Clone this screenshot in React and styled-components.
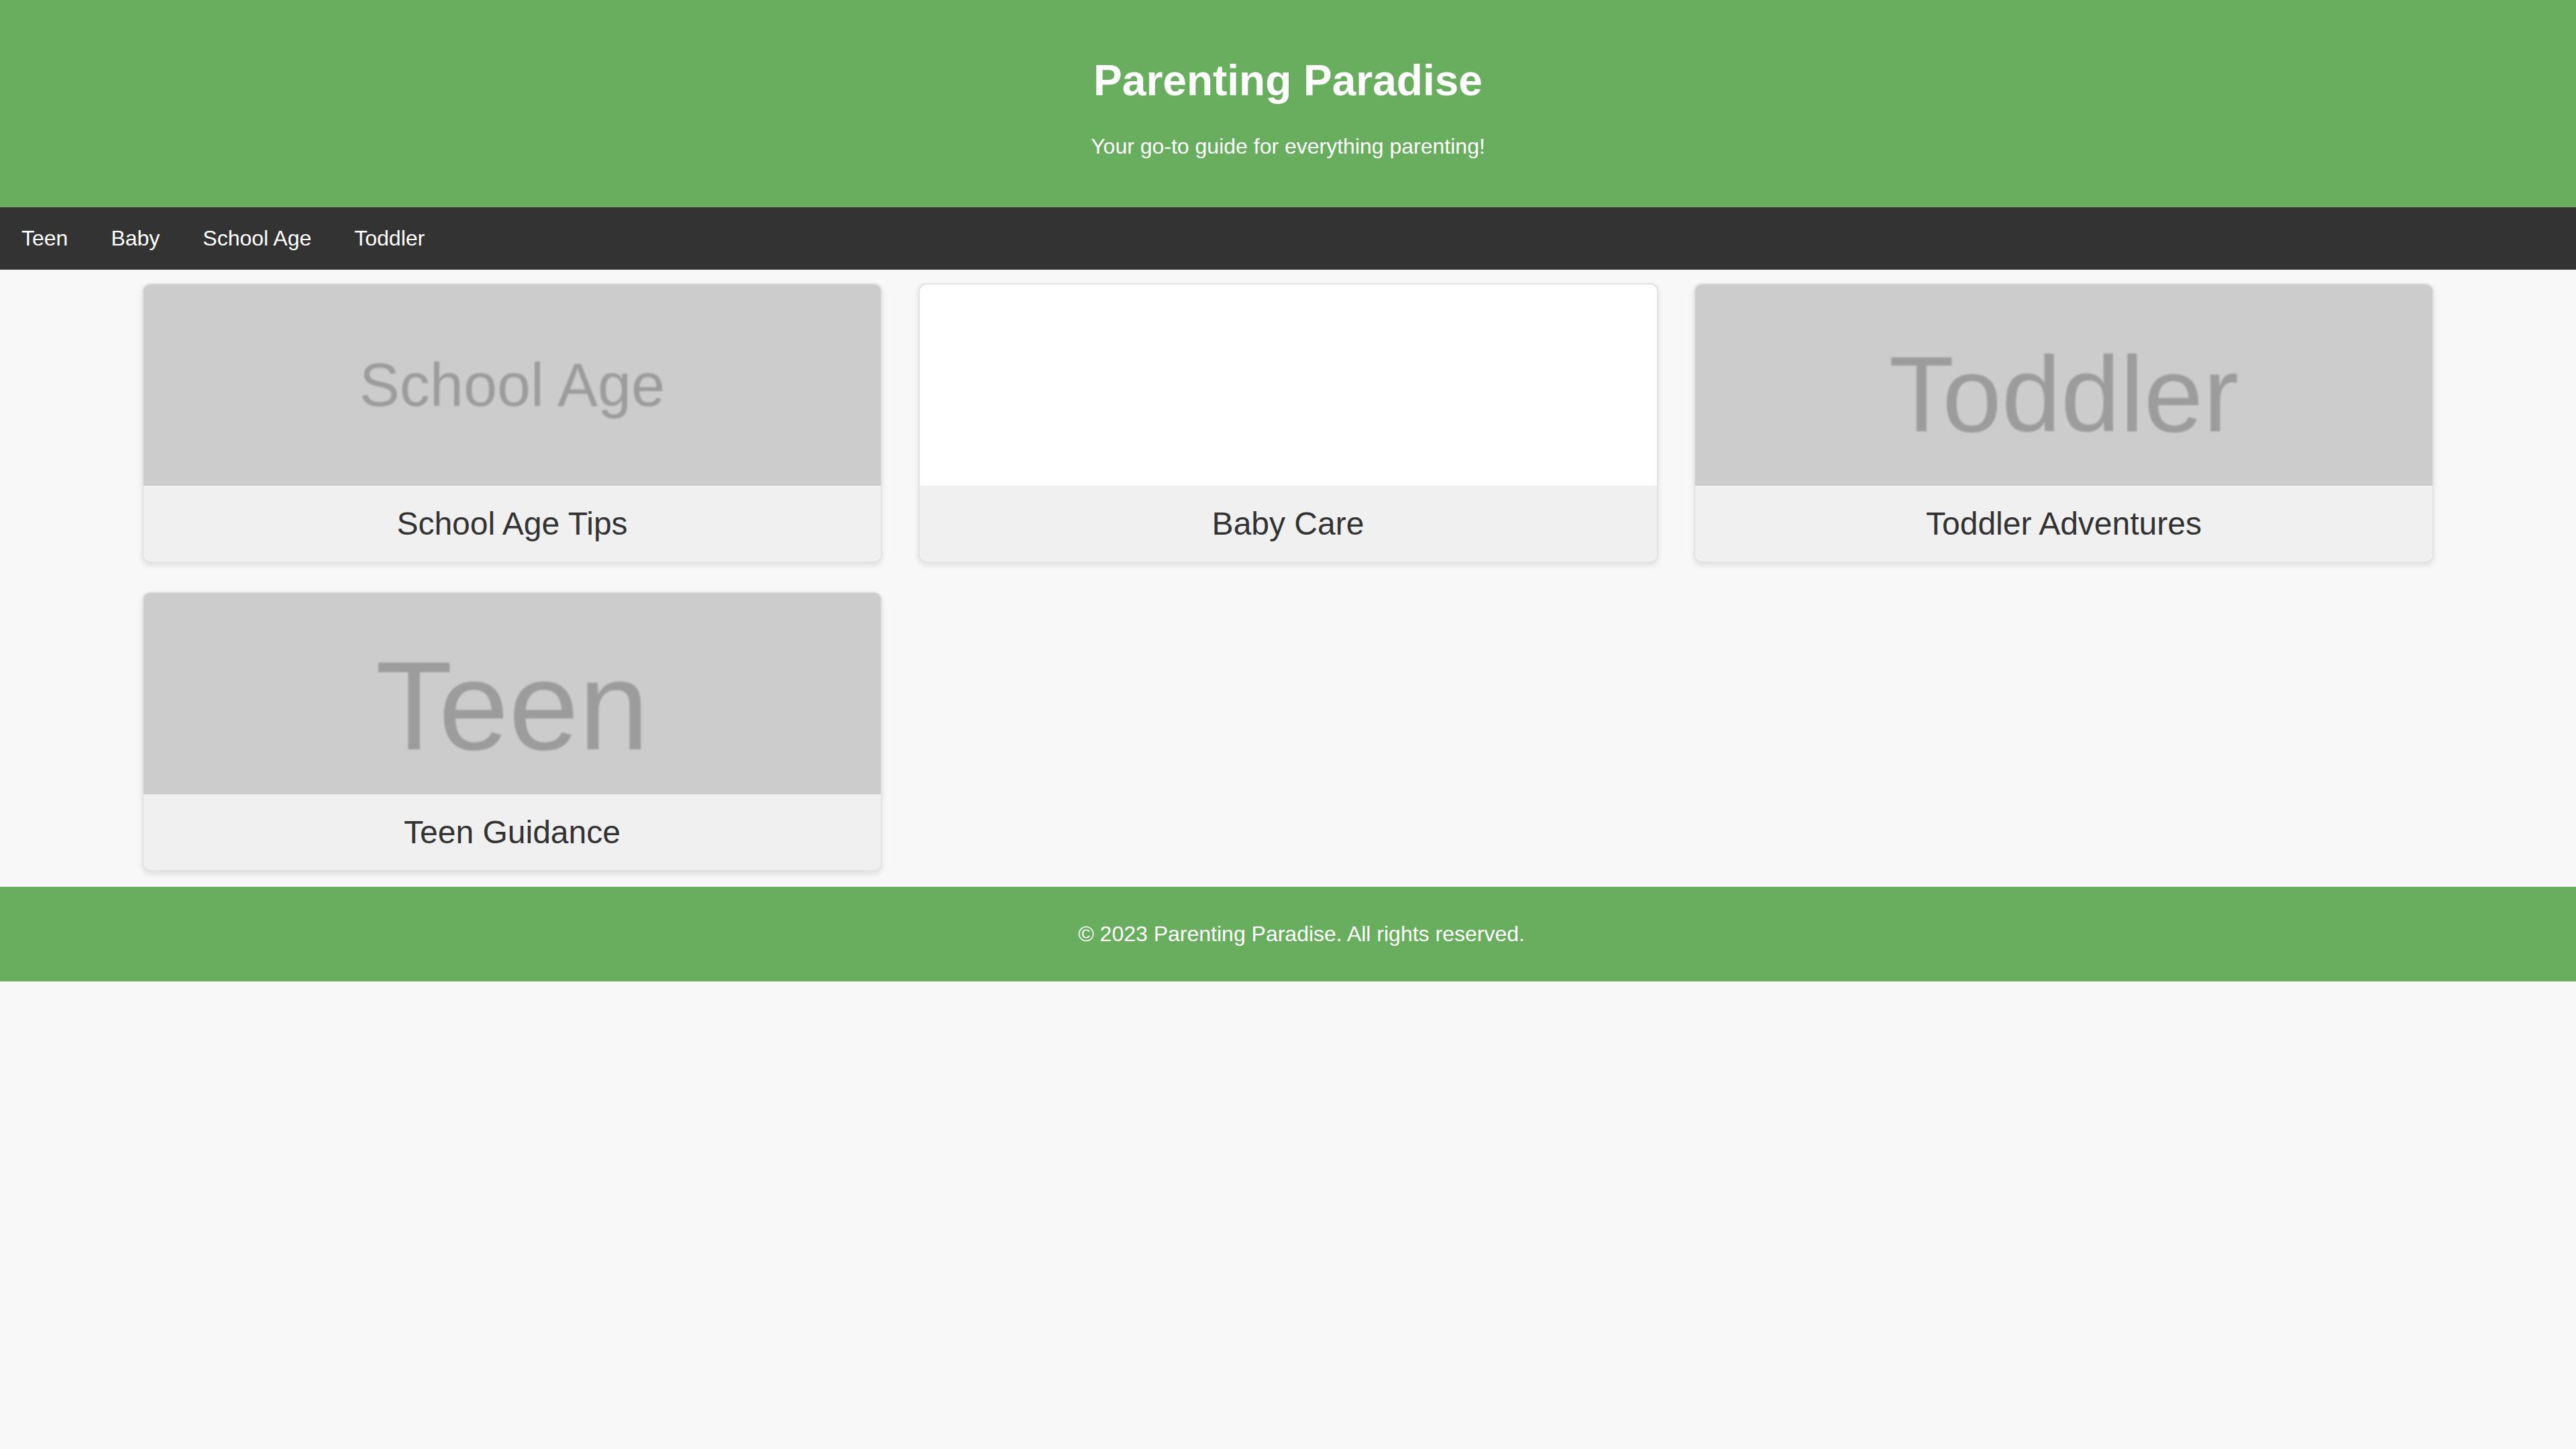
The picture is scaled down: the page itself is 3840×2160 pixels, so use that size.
import React from "react";
import styled, { createGlobalStyle } from "styled-components";

const GlobalStyle = createGlobalStyle`
  html, body {
    margin: 0;
    padding: 0;
    background: #f8f8f8;
    font-family: "Liberation Sans", Arial, sans-serif;
    color: #333;
  }
  * { box-sizing: border-box; }
`;

const Header = styled.header`
  background: #69ae5e;
  color: #fff;
  text-align: center;
  padding: 40px 0;
`;

const Title = styled.h1`
  font-size: 64px;
  font-weight: bold;
  margin: 42.88px 0;
  line-height: normal;
`;

const Tagline = styled.p`
  font-size: 32px;
  margin: 32px 0;
  line-height: normal;
`;

const Nav = styled.nav`
  background: #333;
  display: flex;
`;

const NavLink = styled.a`
  color: #fff;
  text-decoration: none;
  font-size: 32px;
  line-height: 36.8px;
  padding: 28px 32px;
`;

const Main = styled.main`
  padding: 0;
`;

const CardGrid = styled.div`
  width: 90%;
  margin: 0 auto;
  display: flex;
  flex-wrap: wrap;
  justify-content: space-between;
`;

const Card = styled.div`
  width: 1103px;
  margin: 20px 20px 23px;
  border: 2px solid #e2e2e2;
  border-radius: 12px;
  overflow: hidden;
  box-shadow: 0 4px 8px rgba(0, 0, 0, 0.1);
  background: #f0f0f0;
  display: flex;
  flex-direction: column;
`;

const CardImage = styled.div`
  height: 300px;
  background: ${(p) => (p.$blank ? "#ffffff" : "#cccccc")};
  display: flex;
  align-items: center;
  justify-content: center;
  overflow: hidden;
  padding-top: ${(p) => p.$shift || 0}px;
`;

const ImageText = styled.span`
  font-family: "Liberation Sans", Arial, sans-serif;
  font-size: ${(p) => p.$size}px;
  line-height: 1;
  color: #9c9c9c;
  filter: blur(1.2px);
  white-space: nowrap;
`;

const CardTitle = styled.h2`
  margin: 0;
  padding: 29px 16px;
  font-size: 48px;
  font-weight: normal;
  line-height: normal;
  text-align: center;
  color: #333;
  background: #f0f0f0;
`;

const Footer = styled.footer`
  background: #69ae5e;
  color: #fff;
  text-align: center;
  padding: 20px 0 20px 40px;
`;

const FooterText = styled.p`
  font-size: 32px;
  margin: 32px 0;
  line-height: normal;
`;

const cards = [
  { title: "School Age Tips", label: "School Age", size: 90, shift: 0 },
  { title: "Baby Care", label: "", size: 0, blank: true },
  { title: "Toddler Adventures", label: "Toddler", size: 159, shift: 30 },
  { title: "Teen Guidance", label: "Teen", size: 188, shift: 36 },
];

export default function App() {
  return (
    <>
      <GlobalStyle />
      <Header>
        <Title>Parenting Paradise</Title>
        <Tagline>Your go-to guide for everything parenting!</Tagline>
      </Header>
      <Nav>
        <NavLink href="#">Teen</NavLink>
        <NavLink href="#">Baby</NavLink>
        <NavLink href="#">School Age</NavLink>
        <NavLink href="#">Toddler</NavLink>
      </Nav>
      <Main>
        <CardGrid>
          {cards.map((c) => (
            <Card key={c.title}>
              <CardImage $blank={c.blank} $shift={c.shift}>
                {c.label && <ImageText $size={c.size}>{c.label}</ImageText>}
              </CardImage>
              <CardTitle>{c.title}</CardTitle>
            </Card>
          ))}
        </CardGrid>
      </Main>
      <Footer>
        <FooterText>© 2023 Parenting Paradise. All rights reserved.</FooterText>
      </Footer>
    </>
  );
}
